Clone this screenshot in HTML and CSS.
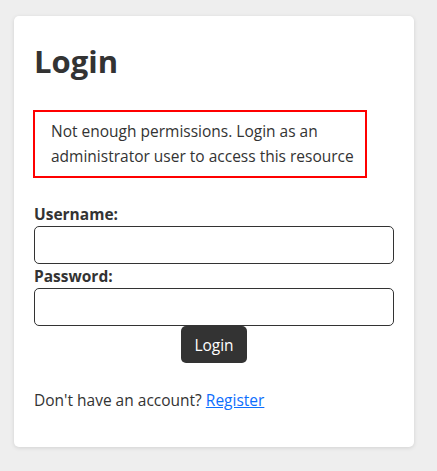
FILE: index.html
```html
<!DOCTYPE html>
<html>
<head>
<meta charset="utf-8">
<link rel="stylesheet" href="styles.css">
</head>
<body>
<div class="card">
  <h1 class="title">Login</h1>
  <div class="error">Not enough permissions. Login as an administrator user to access this resource</div>
  <form class="form">
    <label class="label" for="u">Username:</label>
    <input class="input" id="u" type="text">
    <label class="label" for="p">Password:</label>
    <input class="input" id="p" type="password">
    <button class="btn" type="button">Login</button>
  </form>
  <p class="footer">Don't have an account? <a href="#" class="link">Register</a></p>
</div>
</body>
</html>
```
FILE: styles.css
```css
html, body {
  margin: 0;
  background: #eeeeee;
}
body {
  padding: 16px 14px;
  font-family: "Open Sans", "Noto Sans", sans-serif;
  font-size: 15.5px;
  color: #333333;
}
.card {
  width: 360px;
  height: 391px;
  background: #ffffff;
  border-radius: 5px;
  padding: 20px;
  box-shadow: 0 1px 4px rgba(0,0,0,0.12);
}
.title {
  margin: 7px 0 0;
  font-size: 31px;
  line-height: 36px;
  font-weight: 700;
}
.error {
  margin-top: 31px;
  margin-left: -1px;
  width: 306px;
  border: 2px solid #ff0000;
  padding: 7px 8px 7px 16px;
  line-height: 25px;
}
.form {
  margin-top: 26px;
  display: flex;
  flex-direction: column;
}
.label {
  font-weight: 700;
  line-height: 20px;
}
.input {
  box-sizing: border-box;
  height: 38px;
  width: 360px;
  border: 1px solid #333333;
  border-radius: 5px;
  margin: 2px 0 2px;
  padding: 0 8px;
  font: inherit;
}
.btn {
  align-self: center;
  margin-top: -2px;
  height: 37px;
  padding: 0 13px;
  background: #333333;
  color: #ffffff;
  border: none;
  border-radius: 5px;
  font: inherit;
}
.footer {
  margin: 25px 0 0;
  line-height: 24px;
}
.link {
  color: #0d6efd;
}
```
